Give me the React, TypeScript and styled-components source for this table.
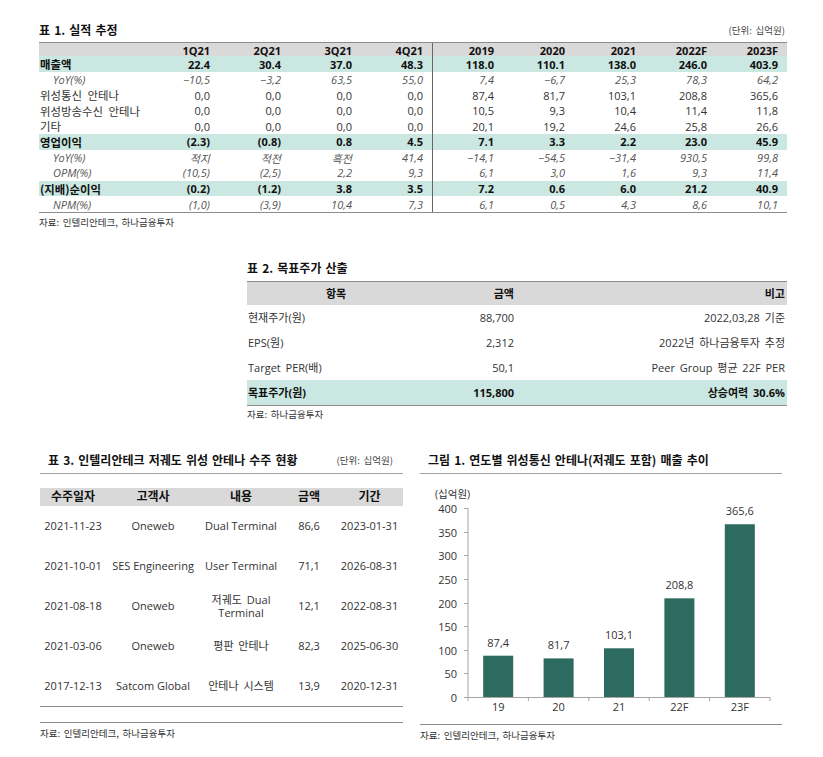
import React from "react";
import styled, { createGlobalStyle, css } from "styled-components";

const Global = createGlobalStyle`
  html, body { margin: 0; padding: 0; background: #fff; }
  body { font-family: "Open Sans", "Noto Sans CJK KR", sans-serif; color: #222; }
  * { box-sizing: border-box; }
`;

const TEAL = "#cae7e1";
const GRAY = "#d9d9d9";
const LINE = "#8c8c8c";
const BAR = "#2d6a5f";

const Page = styled.div`
  width: 823px;
  padding-top: 22px;
  display: flex;
  flex-direction: column;
`;

const Section = styled.section<{ $left: number; $width: number; $top?: number }>`
  margin-left: ${(p) => p.$left}px;
  width: ${(p) => p.$width}px;
  margin-top: ${(p) => p.$top ?? 0}px;
`;

const TitleRow = styled.div<{ $indent?: number; $line?: boolean }>`
  display: flex;
  justify-content: space-between;
  align-items: center;
  height: 16px;
  padding-left: ${(p) => p.$indent ?? 0}px;
  ${(p) =>
    p.$line &&
    css`
      height: 22px;
      padding-bottom: 5px;
      border-bottom: 1px solid #a0a0a0;
    `}
`;

const Title = styled.h2`
  margin: 0;
  font-family: "Noto Sans CJK KR", sans-serif;
  font-size: 12px;
  font-weight: 700;
  color: #111;
  word-spacing: 1.4px;
  line-height: 16px;
  white-space: nowrap;
`;

const Unit = styled.span<{ $pr?: number }>`
  font-family: "Noto Sans CJK KR", sans-serif;
  font-size: 9.5px;
  color: #444;
  word-spacing: 1.5px;
  padding-right: ${(p) => p.$pr ?? 0}px;
  line-height: 16px;
`;

const Source = styled.div<{ $top?: number }>`
  font-family: "Noto Sans CJK KR", sans-serif;
  font-size: 9.5px;
  color: #333;
  word-spacing: 1.5px;
  line-height: 14px;
  margin-top: ${(p) => p.$top ?? 2}px;
`;

/* ---------- Table 1 ---------- */
const T1 = styled.div`
  margin-top: 4px;
  border-bottom: 1px solid ${LINE};
`;

type Variant = "head" | "bold" | "italic" | "normal";

const T1Row = styled.div<{ $v: Variant }>`
  display: grid;
  grid-template-columns: 109px repeat(9, 71px);
  height: ${(p) => (p.$v === "head" ? 14 : 15.6)}px;
  align-items: stretch;
  background: ${(p) => (p.$v === "head" ? GRAY : p.$v === "bold" ? TEAL : "transparent")};
  ${(p) => p.$v === "head" && css`border-top: 1px solid ${LINE};`}
  font-size: 11px;
  font-weight: ${(p) => (p.$v === "head" || p.$v === "bold" ? 700 : 400)};
  font-style: ${(p) => (p.$v === "italic" ? "italic" : "normal")};
  color: ${(p) => (p.$v === "italic" ? "#555" : p.$v === "normal" ? "#333" : "#111")};
`;

const T1Label = styled.div<{ $indent: boolean }>`
  display: flex;
  align-items: center;
  padding-left: ${(p) => (p.$indent ? 14 : 1)}px;
  font-family: ${(p) => (p.$indent ? `"Open Sans", sans-serif` : `"Noto Sans CJK KR", sans-serif`)};
  font-size: ${(p) => (p.$indent ? 11 : 11.4)}px;
  word-spacing: 3px;
  white-space: nowrap;
`;

const T1Cell = styled.div<{ $sep: boolean }>`
  display: flex;
  align-items: center;
  justify-content: flex-end;
  padding-right: 9px;
  white-space: nowrap;
  ${(p) => p.$sep && css`border-left: 1px solid #666;`}
`;

const t1Head = ["1Q21", "2Q21", "3Q21", "4Q21", "2019", "2020", "2021", "2022F", "2023F"];
const t1Rows: { label: string; v: Variant; cells: string[] }[] = [
  { label: "매출액", v: "bold", cells: ["22.4", "30.4", "37.0", "48.3", "118.0", "110.1", "138.0", "246.0", "403.9"] },
  { label: "YoY(%)", v: "italic", cells: ["−10,5", "−3,2", "63,5", "55,0", "7,4", "−6,7", "25,3", "78,3", "64,2"] },
  { label: "위성통신 안테나", v: "normal", cells: ["0,0", "0,0", "0,0", "0,0", "87,4", "81,7", "103,1", "208,8", "365,6"] },
  { label: "위성방송수신 안테나", v: "normal", cells: ["0,0", "0,0", "0,0", "0,0", "10,5", "9,3", "10,4", "11,4", "11,8"] },
  { label: "기타", v: "normal", cells: ["0,0", "0,0", "0,0", "0,0", "20,1", "19,2", "24,6", "25,8", "26,6"] },
  { label: "영업이익", v: "bold", cells: ["(2.3)", "(0.8)", "0.8", "4.5", "7.1", "3.3", "2.2", "23.0", "45.9"] },
  { label: "YoY(%)", v: "italic", cells: ["적지", "적전", "흑전", "41,4", "−14,1", "−54,5", "−31,4", "930,5", "99,8"] },
  { label: "OPM(%)", v: "italic", cells: ["(10,5)", "(2,5)", "2,2", "9,3", "6,1", "3,0", "1,6", "9,3", "11,4"] },
  { label: "(지배)순이익", v: "bold", cells: ["(0.2)", "(1.2)", "3.8", "3.5", "7.2", "0.6", "6.0", "21.2", "40.9"] },
  { label: "NPM(%)", v: "italic", cells: ["(1,0)", "(3,9)", "10,4", "7,3", "6,1", "0,5", "4,3", "8,6", "10,1"] },
];

/* ---------- Table 2 ---------- */
const T2 = styled.div`
  margin-top: 5px;
  border-top: 1px solid ${LINE};
  border-bottom: 1px solid ${LINE};
`;

const T2Row = styled.div<{ $v: Variant }>`
  display: grid;
  grid-template-columns: 178px 91px 1fr;
  height: ${(p) => (p.$v === "head" ? 23 : 25)}px;
  background: ${(p) => (p.$v === "head" ? GRAY : p.$v === "bold" ? TEAL : "transparent")};
  font-size: 11px;
  font-weight: ${(p) => (p.$v === "normal" ? 400 : 700)};
  color: ${(p) => (p.$v === "normal" ? "#333" : "#111")};
  word-spacing: 2px;
`;

const T2Cell = styled.div<{ $align: "left" | "center" | "right" }>`
  display: flex;
  align-items: center;
  justify-content: ${(p) => (p.$align === "left" ? "flex-start" : p.$align === "center" ? "center" : "flex-end")};
  padding-left: ${(p) => (p.$align === "left" ? 1 : 0)}px;
  padding-right: ${(p) => (p.$align === "right" ? 2 : 0)}px;
  white-space: nowrap;
`;

const t2Rows: { v: Variant; c: [string, string, string] }[] = [
  { v: "head", c: ["항목", "금액", "비고"] },
  { v: "normal", c: ["현재주가(원)", "88,700", "2022,03,28 기준"] },
  { v: "normal", c: ["EPS(원)", "2,312", "2022년 하나금융투자 추정"] },
  { v: "normal", c: ["Target PER(배)", "50,1", "Peer Group 평균 22F PER"] },
  { v: "bold", c: ["목표주가(원)", "115,800", "상승여력 30.6%"] },
];

/* ---------- Bottom ---------- */
const Bottom = styled.div`
  display: flex;
  gap: 17px;
  margin-left: 40px;
  margin-top: 31px;
`;

const Column = styled.div<{ $width: number }>`
  width: ${(p) => p.$width}px;
  display: flex;
  flex-direction: column;
`;

const T3 = styled.div`
  margin-top: 14px;
  border-bottom: 1px solid ${LINE};
`;

const T3Row = styled.div<{ $head?: boolean }>`
  display: grid;
  grid-template-columns: 66px 94px 82px 54px 67px;
  height: ${(p) => (p.$head ? 18 : 40)}px;
  background: ${(p) => (p.$head ? GRAY : "transparent")};
  font-size: ${(p) => (p.$head ? 12 : 11)}px;
  font-weight: ${(p) => (p.$head ? 700 : 400)};
  color: ${(p) => (p.$head ? "#111" : "#333")};
`;

const T3Cell = styled.div<{ $wrap?: boolean; $kr?: boolean }>`
  display: flex;
  align-items: center;
  justify-content: center;
  text-align: center;
  line-height: 13px;
  word-spacing: ${(p) => (p.$kr ? 2 : 0)}px;
  white-space: ${(p) => (p.$wrap ? "pre-line" : "nowrap")};
`;

const Spacer = styled.div`
  height: 16px;
  border-bottom: 1px solid ${LINE};
`;

const t3Rows: string[][] = [
  ["2021-11-23", "Oneweb", "Dual Terminal", "86,6", "2023-01-31"],
  ["2021-10-01", "SES Engineering", "User Terminal", "71,1", "2026-08-31"],
  ["2021-08-18", "Oneweb", "저궤도 Dual\nTerminal", "12,1", "2022-08-31"],
  ["2021-03-06", "Oneweb", "평판 안테나", "82,3", "2025-06-30"],
  ["2017-12-13", "Satcom Global", "안테나 시스템", "13,9", "2020-12-31"],
];

const ChartBox = styled.div`
  height: 251px;
  border-bottom: 1px solid ${LINE};
`;

const bars = [
  { l: "19", v: 87.4, t: "87,4" },
  { l: "20", v: 81.7, t: "81,7" },
  { l: "21", v: 103.1, t: "103,1" },
  { l: "22F", v: 208.8, t: "208,8" },
  { l: "23F", v: 365.6, t: "365,6" },
];

function Chart() {
  const x0 = 48;
  const x1 = 350;
  const y0 = 223;
  const top = 34;
  const k = (y0 - top) / 400;
  const cw = (x1 - x0) / 5;
  const ticks = [0, 50, 100, 150, 200, 250, 300, 350, 400];
  const font = `"Open Sans", "Noto Sans CJK KR", sans-serif`;
  return (
    <svg width={362} height={250} viewBox="0 0 362 250" style={{ display: "block" }}>
      <text x={15} y={24} fontSize={10.5} fill="#333" fontFamily={font}>
        (십억원)
      </text>
      <line x1={x0} y1={top} x2={x0} y2={y0} stroke="#a6a6a6" strokeWidth={1} />
      <line x1={x0} y1={y0 + 0.5} x2={x1} y2={y0 + 0.5} stroke="#a6a6a6" strokeWidth={1} />
      {ticks.map((t) => {
        const y = Math.round(y0 - t * k) + 0.5;
        return (
          <g key={t}>
            <line x1={x0 - 4} y1={y} x2={x0} y2={y} stroke="#a6a6a6" />
            <text x={37} y={y + 4} fontSize={11} fill="#333" textAnchor="end" fontFamily={font}>
              {t}
            </text>
          </g>
        );
      })}
      {[0, 1, 2, 3, 4, 5].map((i) => (
        <line key={i} x1={x0 + cw * i} y1={y0} x2={x0 + cw * i} y2={y0 + 4} stroke="#a6a6a6" />
      ))}
      {bars.map((b, i) => {
        const cx = x0 + cw * (i + 0.5);
        const h = b.v * k;
        return (
          <g key={b.l}>
            <rect x={cx - 15} y={y0 - h} width={30} height={h} fill={BAR} />
            <text x={cx} y={y0 - h - 9} fontSize={11} fill="#333" textAnchor="middle" fontFamily={font}>
              {b.t}
            </text>
            <text x={cx} y={y0 + 14} fontSize={11} fill="#333" textAnchor="middle" fontFamily={font}>
              {b.l}
            </text>
          </g>
        );
      })}
    </svg>
  );
}

const hasKorean = (s: string) => /[\uac00-\ud7a3]/.test(s);

export default function App() {
  return (
    <>
      <Global />
      <Page>
        <Section $left={39} $width={748}>
          <TitleRow>
            <Title>표 1. 실적 추정</Title>
            <Unit $pr={2}>(단위: 십억원)</Unit>
          </TitleRow>
          <T1>
            <T1Row $v="head">
              <T1Label $indent={false} />
              {t1Head.map((h, i) => (
                <T1Cell key={h} $sep={i === 4}>
                  {h}
                </T1Cell>
              ))}
            </T1Row>
            {t1Rows.map((r, ri) => (
              <T1Row key={ri} $v={r.v}>
                <T1Label $indent={r.v === "italic"}>{r.label}</T1Label>
                {r.cells.map((c, i) => (
                  <T1Cell key={i} $sep={i === 4}>
                    {c}
                  </T1Cell>
                ))}
              </T1Row>
            ))}
          </T1>
          <Source>자료: 인텔리안테크, 하나금융투자</Source>
        </Section>

        <Section $left={247} $width={540} $top={31}>
          <TitleRow>
            <Title>표 2. 목표주가 산출</Title>
          </TitleRow>
          <T2>
            {t2Rows.map((r, i) => (
              <T2Row key={i} $v={r.v}>
                <T2Cell $align={r.v === "head" ? "center" : "left"}>{r.c[0]}</T2Cell>
                <T2Cell $align="right">{r.c[1]}</T2Cell>
                <T2Cell $align="right">{r.c[2]}</T2Cell>
              </T2Row>
            ))}
          </T2>
          <Source $top={1}>자료: 하나금융투자</Source>
        </Section>

        <Bottom>
          <Column $width={363}>
            <TitleRow $indent={8} $line>
              <Title>표 3. 인텔리안테크 저궤도 위성 안테나 수주 현황</Title>
              <Unit $pr={10}>(단위: 십억원)</Unit>
            </TitleRow>
            <T3>
              <T3Row $head>
                {["수주일자", "고객사", "내용", "금액", "기간"].map((h) => (
                  <T3Cell key={h}>{h}</T3Cell>
                ))}
              </T3Row>
              {t3Rows.map((r, i) => (
                <T3Row key={i}>
                  {r.map((c, j) => (
                    <T3Cell key={j} $wrap={c.includes("\n")} $kr={hasKorean(c)}>
                      {c}
                    </T3Cell>
                  ))}
                </T3Row>
              ))}
            </T3>
            <Spacer />
            <Source $top={3}>자료: 인텔리안테크, 하나금융투자</Source>
          </Column>
          <Column $width={362}>
            <TitleRow $indent={8} $line>
              <Title>그림 1. 연도별 위성통신 안테나(저궤도 포함) 매출 추이</Title>
            </TitleRow>
            <ChartBox>
              <Chart />
            </ChartBox>
            <Source $top={3}>자료: 인텔리안테크, 하나금융투자</Source>
          </Column>
        </Bottom>
      </Page>
    </>
  );
}
